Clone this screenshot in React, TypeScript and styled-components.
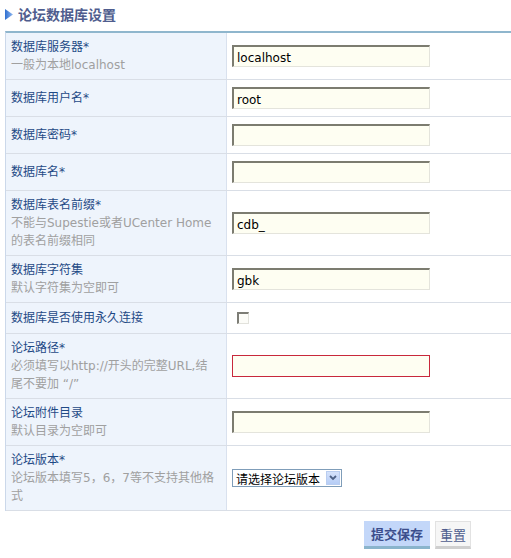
import styled, { createGlobalStyle } from "styled-components";

const GlobalStyle = createGlobalStyle`
  body {
    margin: 0;
    background: #ffffff;
    font-family: "DejaVu Sans", "Noto Sans CJK SC", sans-serif;
    font-size: 12px;
  }
`;

const Page = styled.div`
  width: 511px;
  padding: 4px 0 0 5px;
  box-sizing: border-box;
`;

const TitleBar = styled.h3`
  display: flex;
  align-items: center;
  gap: 5px;
  height: 20px;
  margin: 0 0 7px 0;
  font-size: 14px;
  font-weight: bold;
  color: #4f5d8e;
  font-family: "Noto Sans CJK SC", sans-serif;
`;

const Table = styled.div`
  border-top: 2px solid #8fb6cd;
  border-left: 1px solid #cbd8ea;
`;

const Row = styled.div`
  display: grid;
  grid-template-columns: 221px 1fr;
  border-bottom: 1px solid #d9dee6;
`;

const LabelCell = styled.div`
  background: #eef4fc;
  border-right: 1px solid #d9e1ee;
  padding: 5px 9px 5px 5px;
  line-height: 18px;
  display: flex;
  flex-direction: column;
  justify-content: center;
`;

const Label = styled.span`
  color: #1f4a86;
`;

const Hint = styled.span`
  color: #a0a0a0;
`;

const FieldCell = styled.div<{ $pad?: number }>`
  display: flex;
  align-items: center;
  padding: ${(p) => p.$pad ?? 7}px 5px;
`;

const TextInput = styled.input<{ $error?: boolean }>`
  width: 198px;
  height: 22px;
  box-sizing: border-box;
  padding: 2px 3px 0;
  font-family: "DejaVu Sans", sans-serif;
  font-size: 12px;
  color: #000;
  background: #fefef2;
  outline: none;
  border: ${(p) => (p.$error ? "1px solid #c8283c" : "1px solid #e4e4dc")};
  ${(p) =>
    p.$error
      ? ""
      : "border-top: 2px solid #7c7c70; border-left: 2px solid #7c7c70;"}
`;

const Check = styled.span`
  display: inline-block;
  width: 12px;
  height: 12px;
  margin-left: 5px;
  box-sizing: border-box;
  background: #fcfcf8;
  border: 1px solid #e2e2dc;
  border-top: 2px solid #7d7d76;
  border-left: 2px solid #7d7d76;
`;

const Select = styled.div`
  display: flex;
  align-items: center;
  gap: 4px;
  width: 110px;
  height: 18px;
  box-sizing: border-box;
  border: 1px solid #7f9db9;
  background: #fff;
  padding-left: 3px;
  font-family: "Noto Sans CJK SC", sans-serif;
  font-size: 12px;
  color: #000;
`;

const Arrow = styled.span`
  display: flex;
  align-items: center;
  justify-content: center;
  width: 14px;
  height: 14px;
  margin-left: auto;
  margin-right: 1px;
  background: linear-gradient(#d5e2fb, #b6cdf6);
  border: 1px solid #b9cdf0;
  box-sizing: border-box;
`;

const Actions = styled.div`
  display: flex;
  justify-content: flex-end;
  gap: 5px;
  padding: 10px 40px 0 0;
`;

const Button = styled.button<{ $primary?: boolean }>`
  height: 28px;
  padding: 0 ${(p) => (p.$primary ? 7 : 4)}px;
  border: none;
  border-bottom: 3px solid ${(p) => (p.$primary ? "#8ab4cc" : "#cfcfcf")};
  background: ${(p) => (p.$primary ? "#c3d7f9" : "#f6f6f6")};
  color: ${(p) => (p.$primary ? "#3c4e8c" : "#4f5d8e")};
  font-family: "Noto Sans CJK SC", sans-serif;
  font-weight: ${(p) => (p.$primary ? "bold" : "normal")};
  font-size: 13px;
  ${(p) => (p.$primary ? "" : "border-top: 1px solid #e2e2e2; border-left: 1px solid #e2e2e2; border-right: 1px solid #e2e2e2;")}
`;

type Field = {
  label: string;
  hint?: string;
  kind: "text" | "check" | "select";
  value?: string;
  error?: boolean;
};

const fields: Field[] = [
  { label: "数据库服务器*", hint: "一般为本地localhost", kind: "text", value: "localhost" },
  { label: "数据库用户名*", kind: "text", value: "root" },
  { label: "数据库密码*", kind: "text" },
  { label: "数据库名*", kind: "text" },
  {
    label: "数据库表名前缀*",
    hint: "不能与Supestie或者UCenter Home的表名前缀相同",
    kind: "text",
    value: "cdb_",
  },
  { label: "数据库字符集", hint: "默认字符集为空即可", kind: "text", value: "gbk" },
  { label: "数据库是否使用永久连接", kind: "check" },
  {
    label: "论坛路径*",
    hint: "必须填写以http://开头的完整URL,结尾不要加 “/”",
    kind: "text",
    error: true,
  },
  { label: "论坛附件目录", hint: "默认目录为空即可", kind: "text" },
  { label: "论坛版本*", hint: "论坛版本填写5，6，7等不支持其他格式", kind: "select" },
];

function TitleIcon() {
  return (
    <svg width="8" height="11" viewBox="0 0 8 11">
      <defs>
        <linearGradient id="tri" x1="0" y1="0" x2="1" y2="0">
          <stop offset="0" stopColor="#2f6fd0" />
          <stop offset="1" stopColor="#8fb8f0" />
        </linearGradient>
      </defs>
      <path d="M0 0 L8 5.5 L0 11 Z" fill="url(#tri)" />
    </svg>
  );
}

export default function App() {
  return (
    <Page>
      <GlobalStyle />
      <TitleBar>
        <TitleIcon />
        论坛数据库设置
      </TitleBar>
      <Table>
        {fields.map((f) => (
          <Row key={f.label}>
            <LabelCell>
              <Label>{f.label}</Label>
              {f.hint ? <Hint>{f.hint}</Hint> : null}
            </LabelCell>
            <FieldCell $pad={f.kind === "check" ? 9 : 7}>
              {f.kind === "text" && (
                <TextInput readOnly defaultValue={f.value ?? ""} $error={f.error} />
              )}
              {f.kind === "check" && <Check />}
              {f.kind === "select" && (
                <Select>
                  请选择论坛版本
                  <Arrow>
                    <svg width="8" height="6" viewBox="0 0 8 6">
                      <path d="M1 1 L4 4 L7 1" stroke="#4d6185" strokeWidth="1.8" fill="none" />
                    </svg>
                  </Arrow>
                </Select>
              )}
            </FieldCell>
          </Row>
        ))}
      </Table>
      <Actions>
        <Button $primary>提交保存</Button>
        <Button>重置</Button>
      </Actions>
    </Page>
  );
}
